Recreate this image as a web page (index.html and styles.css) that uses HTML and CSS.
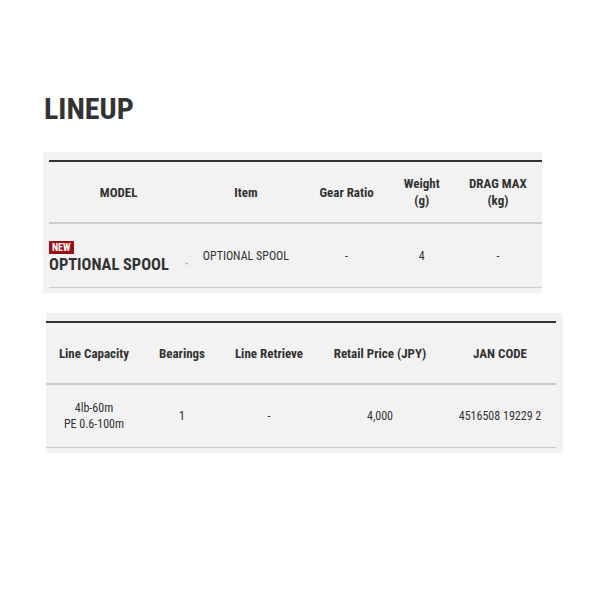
FILE: index.html
```html
<!DOCTYPE html>
<html>
<head>
<meta charset="utf-8">
<link rel="stylesheet" href="styles.css">
</head>
<body>
<main class="page">
  <h2 class="title">LINEUP</h2>
  <div class="box box-one">
    <table class="spec spec-one">
      <colgroup>
        <col class="c139"><col class="c115"><col class="c86"><col class="c64"><col class="c88">
      </colgroup>
      <thead>
        <tr>
          <th>MODEL</th>
          <th>Item</th>
          <th>Gear Ratio</th>
          <th>Weight<br>(g)</th>
          <th>DRAG MAX<br>(kg)</th>
        </tr>
      </thead>
      <tbody>
        <tr>
          <td class="model">
            <span class="badge">NEW</span>
            <div class="model-name">OPTIONAL SPOOL<svg class="chev" viewBox="0 0 8 5" width="8" height="5"><path d="M0.5 0.5 L4 4 L7.5 0.5" fill="none" stroke="#444" stroke-width="1.1"/></svg></div>
          </td>
          <td>OPTIONAL SPOOL</td>
          <td>-</td>
          <td>4</td>
          <td>-</td>
        </tr>
      </tbody>
    </table>
  </div>
  <div class="box box-two">
    <table class="spec spec-two">
      <colgroup>
        <col class="c96"><col class="c80"><col class="c94"><col class="c128"><col class="c112">
      </colgroup>
      <thead>
        <tr>
          <th>Line Capacity</th>
          <th>Bearings</th>
          <th>Line Retrieve</th>
          <th>Retail Price (JPY)</th>
          <th>JAN CODE</th>
        </tr>
      </thead>
      <tbody>
        <tr>
          <td>4lb-60m<br>PE 0.6-100m</td>
          <td>1</td>
          <td>-</td>
          <td>4,000</td>
          <td>4516508 19229 2</td>
        </tr>
      </tbody>
    </table>
  </div>
</main>
</body>
</html>
```
FILE: styles.css
```css
html, body {
  margin: 0;
  padding: 0;
  background: #fff;
}
body {
  font-family: "Roboto Condensed", "Liberation Sans Narrow", "Roboto", sans-serif;
  color: #333;
}
.page {
  padding-top: 92px;
}
.title {
  margin: 0 0 26px 44px;
  font-size: 30px;
  line-height: 34px;
  font-weight: 700;
  letter-spacing: 0;
  color: #333;
}
.box {
  background: #f2f2f2;
}
.box-one {
  margin-left: 43px;
  width: 493px;
  padding: 8px 0 5px 6px;
}
.box-two {
  margin-top: 20px;
  margin-left: 46px;
  width: 510px;
  padding: 8px 7px 5px 0;
}
.spec {
  border-collapse: collapse;
  table-layout: fixed;
  width: 100%;
  border-top: 2px solid #333;
}
.c139 { width: 139px; }
.c115 { width: 115px; }
.c86 { width: 86px; }
.c64 { width: 64px; }
.c88 { width: 88px; }
.c96 { width: 96px; }
.c80 { width: 80px; }
.c94 { width: 94px; }
.c128 { width: 128px; }
.c112 { width: 112px; }
.spec th {
  font-size: 13px;
  font-weight: 700;
  line-height: 17px;
  text-align: center;
  vertical-align: middle;
  padding: 0;
  border-bottom: 2px solid #ccc;
}
.spec-one th { height: 60px; }
.spec-two th { height: 60px; }
.spec td {
  font-size: 12px;
  line-height: 16px;
  text-align: center;
  vertical-align: middle;
  padding: 0;
  border-bottom: 1px solid #ccc;
}
.spec-one td { height: 61px; }
.spec-two td { height: 62px; }
.spec td.model {
  text-align: left;
  padding-top: 2px;
}
.badge {
  display: inline-block;
  background: #9a0f16;
  color: #fff;
  font-size: 10px;
  font-weight: 700;
  line-height: 13px;
  padding: 0 3px;
}
.model-name {
  font-size: 16.4px;
  font-weight: 700;
  line-height: 20px;
  white-space: nowrap;
  display: flex;
  align-items: center;
}
.chev {
  margin-left: 16px;
  margin-bottom: 3px;
}
```
